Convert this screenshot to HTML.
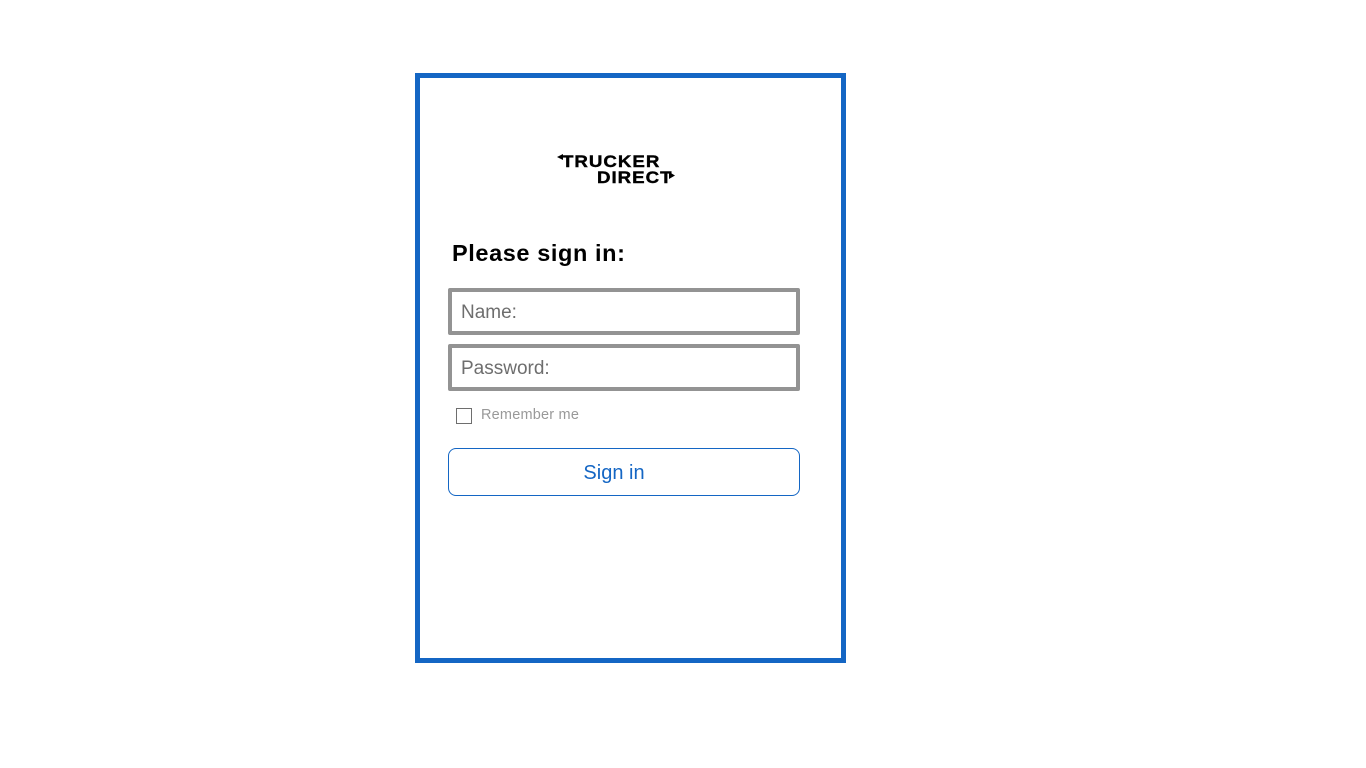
<!DOCTYPE html>
<html><head><style>
body{margin:0;width:1366px;height:768px;background:#fff;font-family:"Liberation Sans",sans-serif;position:relative;overflow:hidden}
.box{position:absolute;left:415px;top:73px;width:421px;height:580px;border:5px solid #1466c4}
.a{position:absolute}
.logo{position:absolute;font-weight:bold;font-size:17px;line-height:16px;letter-spacing:0.9px;color:#000;transform:scaleX(1.1);transform-origin:left top;-webkit-text-stroke:0.4px #000}
.inp{position:absolute;left:448px;width:344px;height:39px;border:4px solid #939393;border-radius:2px;font-size:19px;color:#6e6e6e;line-height:41px;text-indent:9px}
</style></head><body>
<div class="box"></div>
<div class="logo" style="left:562px;top:154px">TRUCKER</div>
<div class="logo" style="left:597px;top:170px">DIRECT</div>
<svg class="a" style="left:557px;top:154px" width="8" height="8"><path d="M0 3 L6 0 L6 6Z" fill="#000"/></svg>
<svg class="a" style="left:667px;top:172px" width="9" height="8"><path d="M8 3.5 L2 0 L2 7Z" fill="#000"/></svg>
<div class="a" style="left:452px;top:240px;font-weight:bold;font-size:23.5px;letter-spacing:0.6px;color:#000">Please sign in:</div>
<div class="inp" style="top:288px">Name:</div>
<div class="inp" style="top:344px">Password:</div>
<div class="a" style="left:456px;top:408px;width:14px;height:14px;border:1px solid #6e6e6e"></div>
<div class="a" style="left:481px;top:407px;font-size:14.5px;letter-spacing:0.2px;color:#999">Remember me</div>
<div class="a" style="left:448px;top:448px;width:330px;padding-right:20px;height:46px;border:1px solid #1466c4;border-radius:8px;text-align:center;line-height:48px;font-size:20px;color:#1466c4">Sign in</div>
</body></html>
